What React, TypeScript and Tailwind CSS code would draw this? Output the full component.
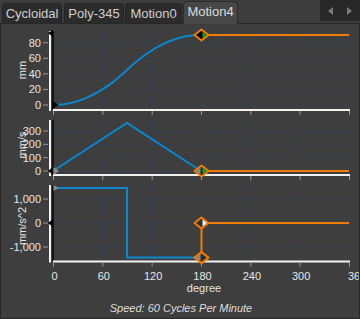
import React from 'react';

const X = (d: number) => 53 + (d * 296) / 360;
const ORANGE = '#f07d00';
const BLUE = '#0b86cf';
const GRID = '#33404f';

type Plot = {
  top: number;
  axis: number;
  title: string;
  titleY: number;
  ticks: { y: number; label: string }[];
};

const plots: Plot[] = [
  {
    top: 31,
    axis: 109,
    title: 'mm',
    titleY: 70,
    ticks: [0, 20, 40, 60, 80].map((v) => ({ y: 105 - v * 0.779, label: String(v) })),
  },
  {
    top: 120,
    axis: 174,
    title: 'mm/s',
    titleY: 145,
    ticks: [0, 100, 200, 300].map((v) => ({ y: 171 - v * 0.1333, label: String(v) })),
  },
  {
    top: 185,
    axis: 260.5,
    title: 'mm/s^2',
    titleY: 226,
    ticks: [
      { y: 199, label: '1,000' },
      { y: 223, label: '0' },
      { y: 247, label: '-1,000' },
    ],
  },
];

// displacement curve, constant accel / decel
function dispPath() {
  const pts: string[] = [];
  for (let d = 0; d <= 180; d += 3) {
    const t = d / 180;
    const s = t < 0.5 ? 180 * t * t : 90 - 180 * (1 - t) * (1 - t);
    pts.push(`${X(d).toFixed(1)},${(105 - s * 0.779).toFixed(1)}`);
  }
  return 'M' + pts.join(' L');
}

function Diamond({ cx, cy, fill = '#2a2a2a' }: { cx: number; cy: number; fill?: string }) {
  return (
    <polygon
      points={`${cx - 7},${cy} ${cx},${cy - 5.5} ${cx + 7},${cy} ${cx},${cy + 5.5}`}
      fill={fill}
      stroke={ORANGE}
      strokeWidth={2}
      strokeLinejoin="round"
    />
  );
}

function PlotFrame({ p }: { p: Plot }) {
  return (
    <g>
      {/* grid */}
      {p.ticks.map((t) => (
        <line key={'h' + t.label} x1={53} x2={349} y1={t.y} y2={t.y} stroke={GRID} strokeDasharray="2 1" />
      ))}
      {[60, 120, 180, 240, 300].map((d) => (
        <line key={'v' + d} x1={X(d) + 0.5} x2={X(d) + 0.5} y1={p.top} y2={p.axis} stroke={GRID} strokeDasharray="2 1" />
      ))}
      {/* y axis */}
      <rect x={49} y={p.top} width={2} height={p.axis - p.top + 2} fill="#f2f2f2" />
      <rect x={52} y={p.top} width={2} height={p.axis - p.top} fill="#141414" />
      {p.ticks.map((t) => (
        <g key={'t' + t.label}>
          <line x1={43} x2={48} y1={t.y} y2={t.y} stroke="#9a9a9a" />
          <text x={41} y={t.y + 4} textAnchor="end" fontSize={11} fill="#e6e6e6">
            {t.label}
          </text>
        </g>
      ))}
      <text
        x={0}
        y={0}
        transform={`translate(26 ${p.titleY}) rotate(-90)`}
        textAnchor="middle"
        fontSize={11}
        fill="#e6e6e6"
      >
        {p.title}
      </text>
      {/* x axis */}
      <rect x={53} y={p.axis} width={297} height={2} fill="#f2f2f2" />
      {[0, 60, 120, 180, 240, 300, 360].map((d) => (
        <rect key={'x' + d} x={X(d)} y={p.axis + 2} width={1} height={4} fill="#9a9a9a" />
      ))}
    </g>
  );
}

function Charts() {
  return (
    <svg width={358} height={274} viewBox="1 24 358 274" className="block">
      {plots.map((p) => (
        <PlotFrame key={p.title} p={p} />
      ))}

      {/* plot 1 */}
      <path d={dispPath()} fill="none" stroke={BLUE} strokeWidth={2} />
      <line x1={201} x2={349} y1={35} y2={35} stroke={ORANGE} strokeWidth={2} />
      <polygon points="48,33 53,30 53,37" fill="#000" />
      <polygon points="52,101 52,109 59,105" fill="#000" />
      <Diamond cx={201.5} cy={35} fill="#050505" />
      <polygon points="202.5,31.5 202.5,38.5 207,35" fill="#1f9a2a" />

      {/* plot 2 */}
      <polyline points={`53,171 ${X(90)},123 201,171`} fill="none" stroke={BLUE} strokeWidth={2} />
      <line x1={201} x2={349} y1={171} y2={171} stroke={ORANGE} strokeWidth={2} />
      <polygon points="48,171 53,167 53,175" fill="#000" />
      <polygon points="53.5,167 53.5,175 59,171" fill="#8a8a8a" />
      <Diamond cx={201.5} cy={171} fill="#2a2a2a" />
      <polygon points="200.5,167.5 200.5,174.5 196,171" fill="#8a8a8a" />
      <polygon points="202.5,167.5 202.5,174.5 207,171" fill="#1f9a2a" />

      {/* plot 3 */}
      <path d={`M58,188 H${X(90)} V257.6 H196`} fill="none" stroke={BLUE} strokeWidth={2} />
      <polygon points="53.5,185 53.5,191 59,188" fill="#8a8a8a" />
      <polygon points="48,223 53,219 53,227" fill="#000" />
      <path d="M201.5,257.6 V223 H349" fill="none" stroke={ORANGE} strokeWidth={2} />
      <Diamond cx={201.5} cy={223} fill="#2e2e2e" />
      <polygon points="202.5,219.5 202.5,226.5 207,223" fill="#f4f4f4" />
      <Diamond cx={201.5} cy={257.6} fill="#2e2e2e" />
      <polygon points="200.5,254 200.5,261 196,257.6" fill="#8a8a8a" />

      {/* x labels */}
      {[0, 60, 120, 180, 240, 300].map((d) => (
        <text key={'l' + d} x={X(d) + 1.5} y={280} textAnchor="middle" fontSize={11} fill="#e6e6e6">
          {d}
        </text>
      ))}
      <text x={348} y={280} fontSize={11} fill="#e6e6e6">
        360
      </text>
      <text x={204} y={292} textAnchor="middle" fontSize={11} fill="#e6e6e6">
        degree
      </text>
    </svg>
  );
}

const tabs = [
  { name: 'Cycloidal', w: 'w-[60px]', ml: 'ml-[2px]' },
  { name: 'Poly-345', w: 'w-[60px]', ml: 'ml-[2px]' },
  { name: 'Motion0', w: 'w-[57px]', ml: 'ml-[1px]' },
];

export default function App() {
  return (
    <div className="w-[360px] h-[319px] overflow-hidden bg-[#3d3d3d] font-['Liberation_Sans',Arial,sans-serif] flex flex-col">
      {/* tab strip */}
      <div className="h-[23px] flex items-end relative">
        {tabs.map((t) => (
          <div
            key={t.name}
            className={`${t.w} ${t.ml} h-[20px] bg-[#2b2b2b] border border-b-0 border-[#252525] rounded-t-[4px] text-[13px] text-[#cfcfcf] flex items-center justify-center leading-none`}
          >
            {t.name}
          </div>
        ))}
        <div className="w-[55px] ml-[1px] h-[23px] mb-[-1px] z-10 bg-[#474747] border border-b-0 border-[#2a2a2a] rounded-t-[4px] text-[13px] text-[#dcdcdc] flex items-center justify-center leading-none pb-[3px]">
          Motion4
        </div>
        <div className="flex-1" />
        <div className="self-start w-[40px] h-[21px] bg-[#282828] flex items-center justify-between px-[8px]">
          <span className="w-0 h-0 border-y-[4px] border-y-transparent border-r-[5px] border-r-[#7a7a7a]" />
          <span className="w-0 h-0 border-y-[4px] border-y-transparent border-l-[5px] border-l-[#7a7a7a]" />
        </div>
      </div>

      {/* chart panel */}
      <div className="flex-1 border border-[#272727] bg-[#3e3e3e] flex flex-col">
        <Charts />
        <div className="flex-1 flex items-center justify-center italic text-[11px] text-[#dedede] pl-[2px]">
          Speed: 60 Cycles Per Minute
        </div>
      </div>
    </div>
  );
}
